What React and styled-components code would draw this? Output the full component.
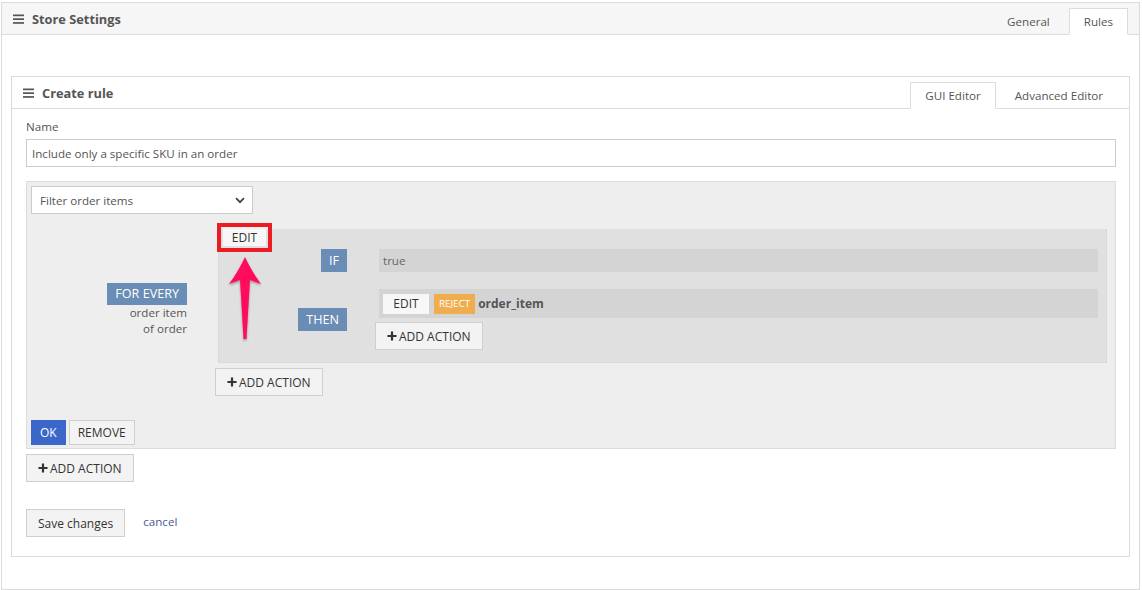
import React from 'react';
import styled, { createGlobalStyle } from 'styled-components';

const GlobalStyle = createGlobalStyle`
  body {
    margin: 0;
    font-family: "Open Sans", "Noto Sans", sans-serif;
    font-size: 11.6px;
    color: #555;
    background: #fff;
  }
  * {
    box-sizing: border-box;
  }
`;

function BarsIcon() {
  return (
    <svg width="11" height="10" viewBox="0 0 11 10">
      <rect x="0" y="0.5" width="11" height="1.7" fill="#555" />
      <rect x="0" y="4.3" width="11" height="1.7" fill="#555" />
      <rect x="0" y="8.1" width="11" height="1.7" fill="#555" />
    </svg>
  );
}

function PlusIcon() {
  return (
    <svg width="10" height="10" viewBox="0 0 10 10">
      <path d="M5 0.5v9M0.5 5h9" stroke="#333" strokeWidth="2.2" />
    </svg>
  );
}

function ChevronIcon() {
  return (
    <svg width="10" height="7" viewBox="0 0 10 7">
      <path d="M1 1.2l4 4 4-4" stroke="#444" strokeWidth="1.8" fill="none" />
    </svg>
  );
}

function AddAction({ className }) {
  return (
    <Button className={className}>
      <PlusIcon />
      ADD ACTION
    </Button>
  );
}

function App() {
  return (
    <>
      <GlobalStyle />
      <OuterPanel>
        <Header>
          <Title>
            <BarsIcon />
            Store Settings
          </Title>
          <Tabs>
            <Tab>General</Tab>
            <Tab active>Rules</Tab>
          </Tabs>
        </Header>
        <OuterBody>
          <InnerPanel>
            <Header inner>
              <Title>
                <BarsIcon />
                Create rule
              </Title>
              <Tabs>
                <Tab active>GUI Editor</Tab>
                <Tab>Advanced Editor</Tab>
              </Tabs>
            </Header>
            <InnerBody>
              <FieldLabel>Name</FieldLabel>
              <TextInput readOnly value="Include only a specific SKU in an order" />
              <RuleBox>
                <FakeSelect>
                  <span>Filter order items</span>
                  <ChevronIcon />
                </FakeSelect>
                <RuleRow>
                  <LeftColumn>
                    <Tag>FOR EVERY</Tag>
                    <SubText>order item</SubText>
                    <SubText>of order</SubText>
                  </LeftColumn>
                  <ContentColumn>
                    <DarkBox>
                      <EditButton highlighted>EDIT</EditButton>
                      <CondGrid>
                        <Tag small>IF</Tag>
                        <CondBar>true</CondBar>
                        <Tag small>THEN</Tag>
                        <ActionStack>
                          <ActionBar>
                            <EditButton wide>EDIT</EditButton>
                            <Reject>REJECT</Reject>
                            <ActionName>order_item</ActionName>
                          </ActionBar>
                          <AddAction />
                        </ActionStack>
                      </CondGrid>
                    </DarkBox>
                    <ShiftedAdd />
                    <Arrow width="45" height="95" viewBox="0 0 45 95">
                      <defs>
                        <filter id="sh" x="-50%" y="-20%" width="200%" height="140%">
                          <feDropShadow dx="0" dy="1.5" stdDeviation="1.2" floodColor="#000" floodOpacity="0.35" />
                        </filter>
                      </defs>
                      <path
                        d="M20 7 Q27 22 36 34 L25 30 L21.5 89 L18.5 89 L15 30 L4 34 Q13 22 20 7 Z"
                        fill="#ff0a5c"
                        filter="url(#sh)"
                      />
                    </Arrow>
                  </ContentColumn>
                </RuleRow>
                <ButtonRow>
                  <OkButton>OK</OkButton>
                  <Button>REMOVE</Button>
                </ButtonRow>
              </RuleBox>
              <BottomAdd />
              <SaveRow>
                <Button>Save changes</Button>
                <CancelLink>cancel</CancelLink>
              </SaveRow>
            </InnerBody>
          </InnerPanel>
        </OuterBody>
      </OuterPanel>
    </>
  );
}

export default App;

const OuterPanel = styled.div`
  margin: 2px 2px 0 1px;
  border: 1px solid #dcdcdc;
`;

const Header = styled.div`
  display: flex;
  justify-content: space-between;
  align-items: flex-end;
  height: 32px;
  padding: 0 11px;
  background: ${props => (props.inner ? '#fff' : '#f6f6f6')};
  border-bottom: 1px solid #dcdcdc;
`;

const Title = styled.div`
  align-self: center;
  display: flex;
  align-items: center;
  gap: 8px;
  font-size: 12.8px;
  font-weight: bold;
  color: #555;
`;

const Tabs = styled.div`
  display: flex;
  gap: 4px;
  margin-bottom: -1px;
`;

const Tab = styled.div`
  height: 27px;
  line-height: 25px;
  padding: 0 14px;
  color: #555;
  border: 1px solid ${props => (props.active ? '#dcdcdc' : 'transparent')};
  border-bottom-color: ${props => (props.active ? '#fff' : 'transparent')};
  background: ${props => (props.active ? '#fff' : 'transparent')};
`;

const OuterBody = styled.div`
  padding: 41px 9px 32px 9px;
`;

const InnerPanel = styled.div`
  border: 1px solid #dcdcdc;
`;

const InnerBody = styled.div`
  padding: 9px 13px 19px 14px;
`;

const FieldLabel = styled.div`
  line-height: 18px;
  margin-bottom: 3px;
  color: #555;
`;

const TextInput = styled.input`
  display: block;
  width: 100%;
  height: 28px;
  padding: 0 5px;
  border: 1px solid #ccc;
  font-family: inherit;
  font-size: 11.6px;
  color: #555;
  outline: none;
`;

const RuleBox = styled.div`
  margin-top: 14px;
  padding: 4px 4px 3px 4px;
  background: #eee;
  border: 1px solid #dcdcdc;
`;

const FakeSelect = styled.div`
  display: flex;
  justify-content: space-between;
  align-items: center;
  width: 222px;
  height: 28px;
  padding: 0 7px 0 8px;
  background: #fff;
  border: 1px solid #ccc;
  color: #555;
`;

const RuleRow = styled.div`
  display: grid;
  grid-template-columns: 156px 1fr;
  column-gap: 28px;
  margin-top: 15px;
`;

const LeftColumn = styled.div`
  display: flex;
  flex-direction: column;
  align-items: flex-end;
  padding-top: 54px;
`;

const Tag = styled.div`
  height: ${props => (props.small ? '23px' : '22px')};
  line-height: ${props => (props.small ? '23px' : '22px')};
  padding: 0 8px;
  background: #6a8db6;
  color: #fff;
  font-size: 12.6px;
  justify-self: end;
  white-space: nowrap;
`;

const SubText = styled.div`
  line-height: 16px;
  color: #555;
  text-align: right;
`;

const ContentColumn = styled.div`
  position: relative;
  display: flex;
  flex-direction: column;
  align-items: flex-start;
`;

const DarkBox = styled.div`
  align-self: stretch;
  margin: 0 4px 0 3px;
  padding: 0 8px 12px 4px;
  background: #e0e0e0;
  border: 1px solid #dadada;
  border-top: none;
`;

const EditButton = styled.div`
  width: ${props => (props.wide ? '46px' : '43px')};
  height: ${props => (props.wide ? '20px' : '17px')};
  line-height: ${props => (props.wide ? '20px' : '17px')};
  text-align: center;
  background: #f7f7f7;
  color: #333;
  font-size: 12px;
  outline: ${props => (props.highlighted ? '4px solid #ec1c24' : 'none')};
  outline-offset: 2px;
  margin-bottom: ${props => (props.highlighted ? '3px' : '0')};
`;

const CondGrid = styled.div`
  display: grid;
  grid-template-columns: 124px 1fr;
  align-items: center;
  column-gap: 28px;
  row-gap: 17px;
`;

const CondBar = styled.div`
  margin-left: 4px;
  height: 23px;
  line-height: 23px;
  padding: 0 4px;
  background: #d4d4d4;
  color: #666;
`;

const ActionStack = styled.div`
  display: flex;
  flex-direction: column;
  align-items: flex-start;
  gap: 4px;
`;

const ActionBar = styled.div`
  align-self: stretch;
  display: flex;
  align-items: center;
  gap: 5px;
  margin-left: 4px;
  height: 29px;
  padding: 0 4px;
  background: #d4d4d4;
`;

const Reject = styled.div`
  height: 20px;
  line-height: 20px;
  padding: 0 5px;
  background: #f0ad4e;
  color: #fff;
  font-size: 9.8px;
`;

const ActionName = styled.div`
  margin-left: -2px;
  font-size: 12px;
  font-weight: bold;
  color: #555;
`;

const Button = styled.div`
  display: inline-flex;
  align-items: center;
  gap: 2px;
  height: 28px;
  padding: 0 11px;
  background: #f3f3f3;
  border: 1px solid #cfcfcf;
  color: #333;
  font-size: 12px;
  white-space: nowrap;
`;

const ShiftedAdd = styled(AddAction)`
  margin-top: 5px;
`;

const BottomAdd = styled(AddAction)`
  margin-top: 5px;
`;

const ButtonRow = styled.div`
  display: flex;
  gap: 3px;
  margin-top: 24px;
  ${Button} {
    height: 25px;
    padding: 0 8px;
  }
`;

const OkButton = styled.div`
  height: 25px;
  line-height: 25px;
  padding: 0 9px;
  background: #3a67c8;
  color: #fff;
  font-size: 12px;
`;

const SaveRow = styled.div`
  display: flex;
  align-items: center;
  gap: 18px;
  margin-top: 27px;
`;

const CancelLink = styled.a`
  color: #4a5b93;
  cursor: pointer;
  margin-top: -3px;
`;

const Arrow = styled.svg`
  position: absolute;
  left: 10px;
  top: 21px;
  overflow: visible;
  pointer-events: none;
`;
